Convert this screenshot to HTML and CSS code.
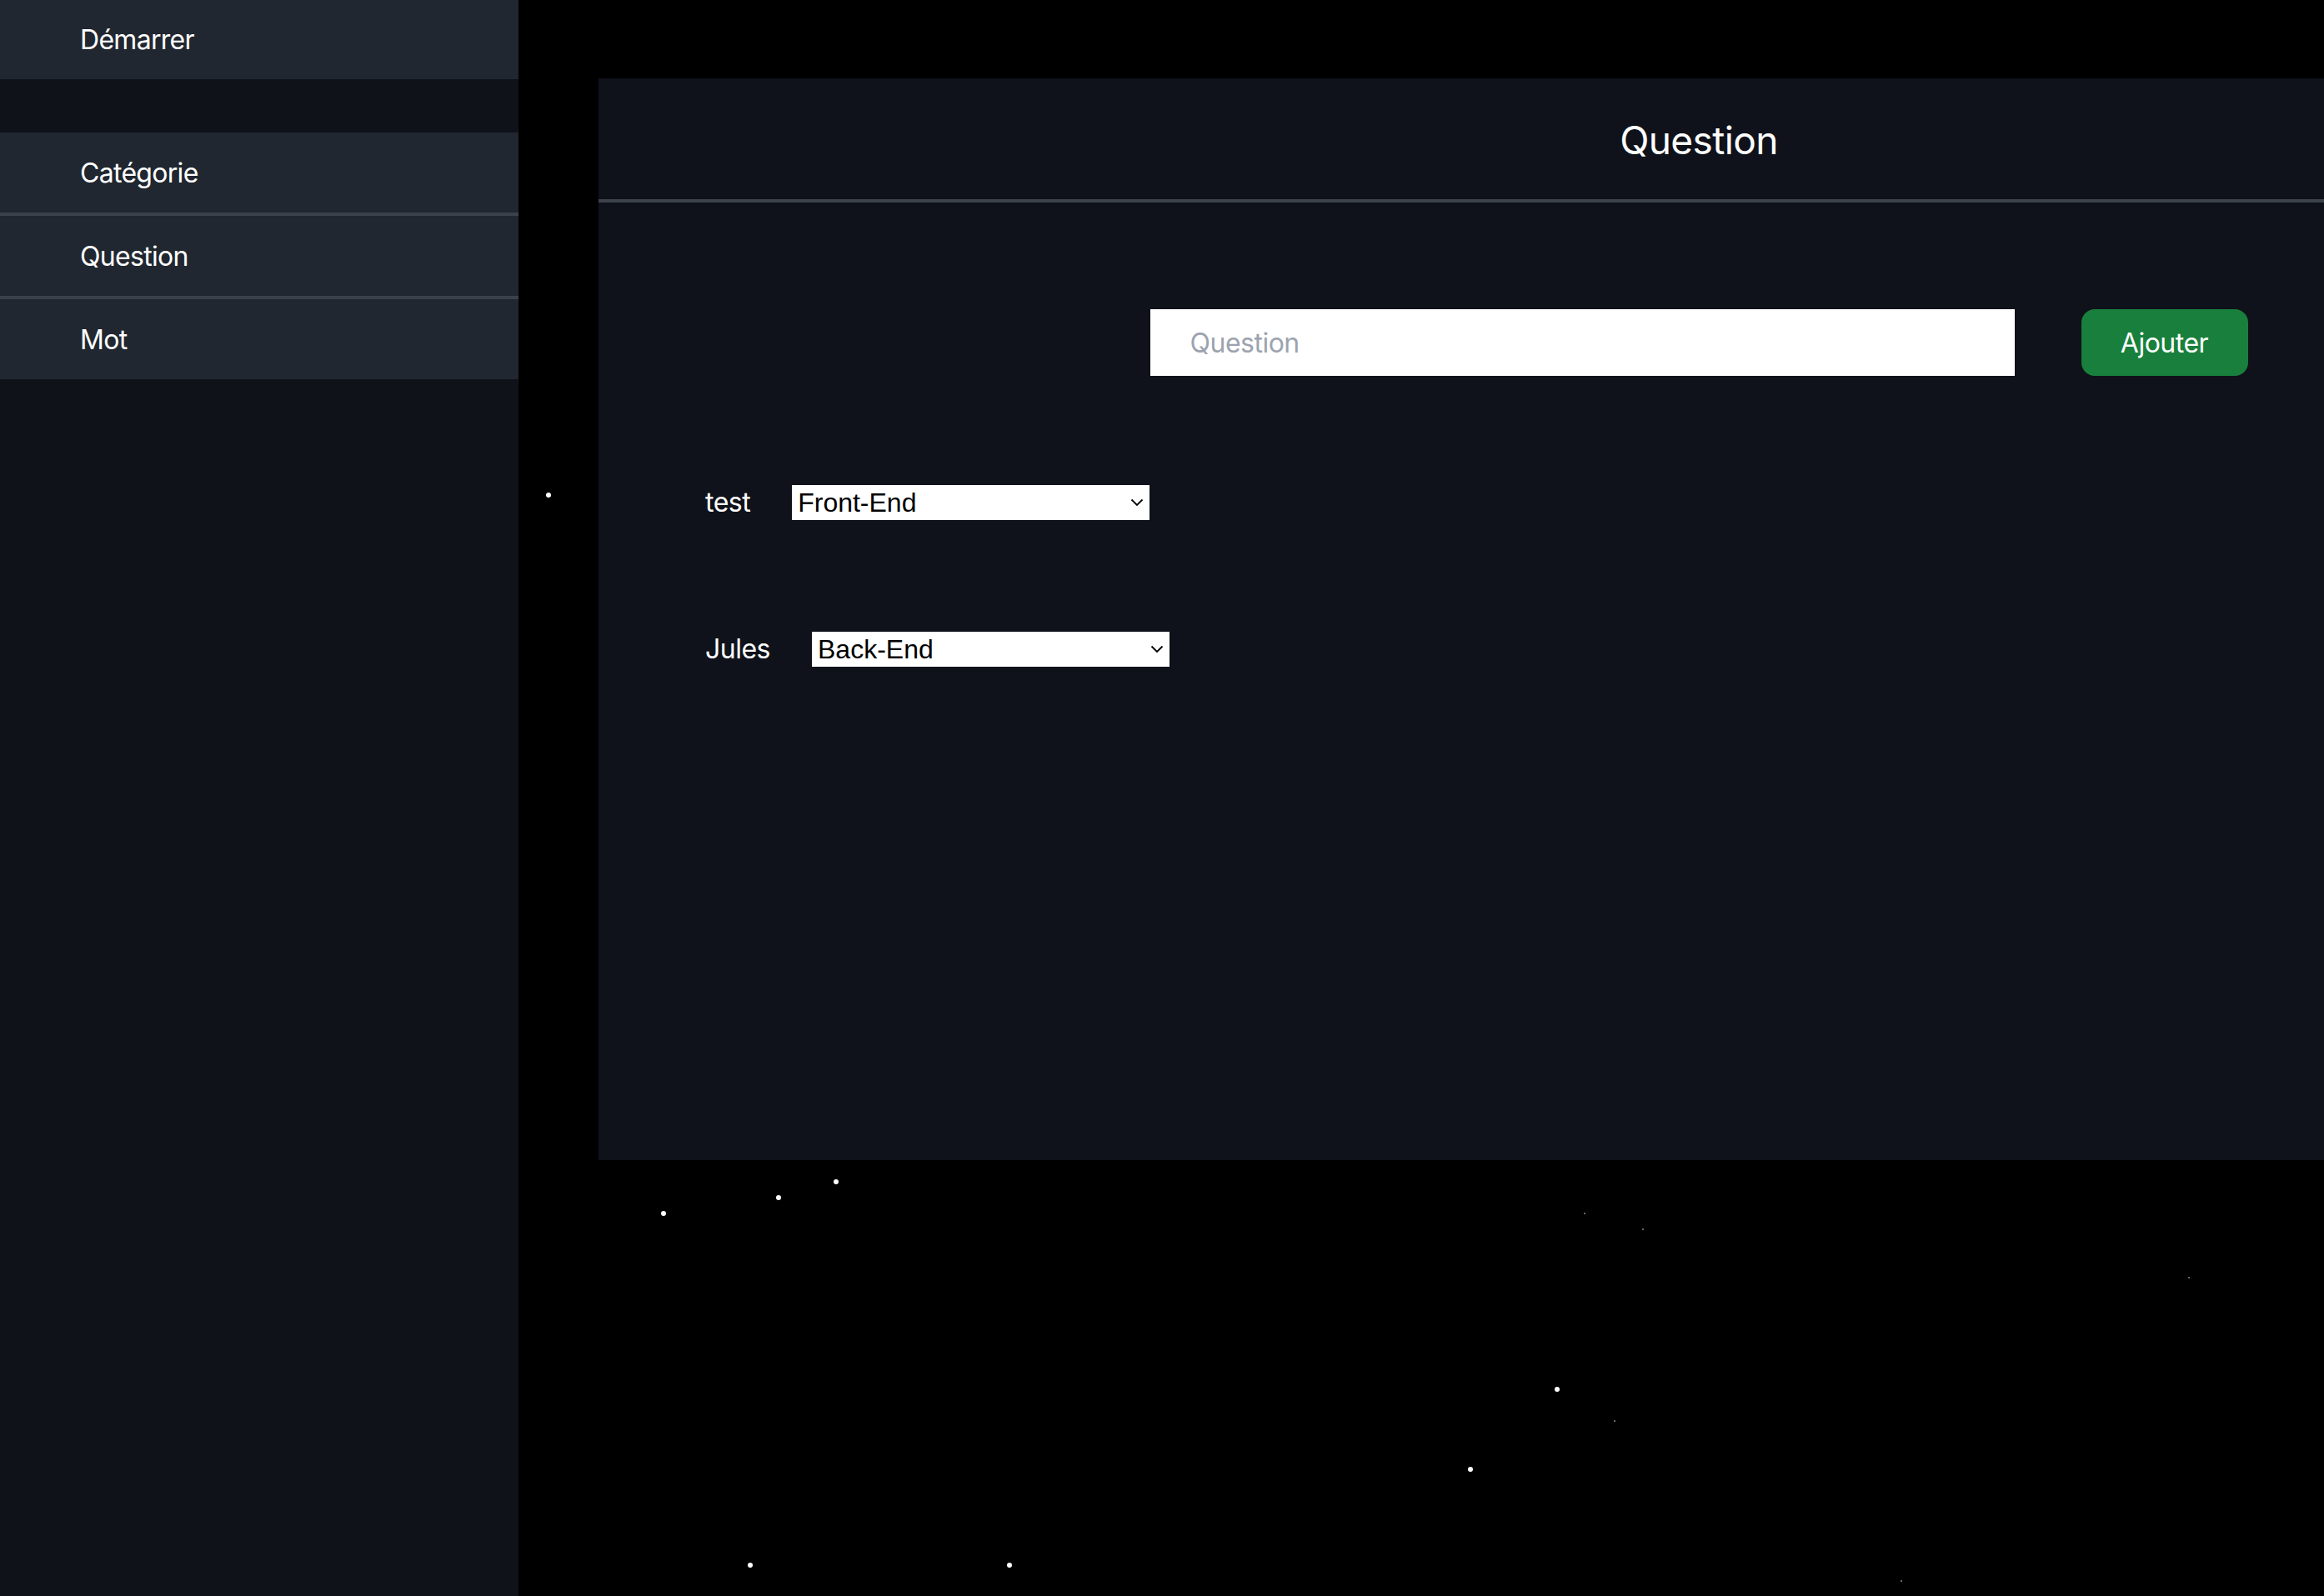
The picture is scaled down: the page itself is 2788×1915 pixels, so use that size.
FILE: index.html
```html
<!DOCTYPE html>
<html lang="fr">
<head>
<meta charset="utf-8">
<title>Question</title>
<link rel="stylesheet" href="styles.css">
</head>
<body>
<div class="stars">
  <span class="star" style="left:655px;top:591px"></span>
  <span class="star" style="left:793px;top:1453px"></span>
  <span class="star" style="left:931px;top:1434px"></span>
  <span class="star" style="left:1000px;top:1415px"></span>
  <span class="star tiny" style="left:1900px;top:1455px"></span>
  <span class="star tiny" style="left:1970px;top:1474px"></span>
  <span class="star tiny" style="left:2625px;top:1532px"></span>
  <span class="star" style="left:1865px;top:1664px"></span>
  <span class="star tiny" style="left:1936px;top:1704px"></span>
  <span class="star" style="left:1761px;top:1760px"></span>
  <span class="star" style="left:897px;top:1875px"></span>
  <span class="star" style="left:1208px;top:1875px"></span>
  <span class="star tiny" style="left:2280px;top:1896px"></span>
</div>
<div class="layout">
  <nav class="sidebar">
    <a class="nav-item start">Démarrer</a>
    <div class="nav-spacer"></div>
    <a class="nav-item bordered">Catégorie</a>
    <a class="nav-item bordered">Question</a>
    <a class="nav-item">Mot</a>
  </nav>
  <main class="panel">
    <header class="panel-header">
      <h1 class="panel-title">Question</h1>
    </header>
    <section class="panel-body">
      <form class="add-form">
        <input class="add-input" type="text" placeholder="Question">
        <button class="add-btn" type="button">Ajouter</button>
      </form>
      <div class="rows">
        <div class="row">
          <span class="row-label">test</span>
          <div class="select-wrap">
            <select class="cat-select">
              <option selected>Front-End</option>
              <option>Back-End</option>
            </select>
            <svg class="chev" width="16" height="10" viewBox="0 0 16 10"><path d="M1.5 1.5 L8 8 L14.5 1.5" fill="none" stroke="#000" stroke-width="1.8"/></svg>
          </div>
        </div>
        <div class="row">
          <span class="row-label">Jules</span>
          <div class="select-wrap">
            <select class="cat-select">
              <option>Front-End</option>
              <option selected>Back-End</option>
            </select>
            <svg class="chev" width="16" height="10" viewBox="0 0 16 10"><path d="M1.5 1.5 L8 8 L14.5 1.5" fill="none" stroke="#000" stroke-width="1.8"/></svg>
          </div>
        </div>
      </div>
    </section>
  </main>
</div>
</body>
</html>
```

FILE: styles.css
```css
html, body {
  margin: 0;
  padding: 0;
  background: #000;
  overflow: hidden;
  width: 2788px;
  height: 1915px;
  font-family: Inter, "Noto Sans", "Liberation Sans", sans-serif;
  color: #fff;
}

.stars {
  position: absolute;
  inset: 0;
  z-index: 0;
}

.star {
  position: absolute;
  width: 6px;
  height: 6px;
  border-radius: 50%;
  background: #fff;
}

.star.tiny {
  width: 2px;
  height: 2px;
  background: #888;
}

.layout {
  position: relative;
  z-index: 1;
  display: flex;
  align-items: flex-start;
}

.sidebar {
  width: 622px;
  height: 1915px;
  background: #0f1219;
  display: flex;
  flex-direction: column;
  flex-shrink: 0;
}

.nav-item {
  display: flex;
  align-items: center;
  height: 96px;
  padding-left: 96px;
  background: #212730;
  font-size: 32px;
  letter-spacing: -0.7px;
  color: #fff;
  box-sizing: border-box;
}

.nav-item.start {
  height: 95px;
}

.nav-item.bordered {
  height: 100px;
  border-bottom: 4px solid #3a414b;
}

.nav-spacer {
  height: 64px;
}

.panel {
  margin-left: 96px;
  margin-top: 94px;
  width: 2640px;
  height: 1298px;
  flex-shrink: 0;
  background: #0f121a;
}

.panel-header {
  height: 149px;
  box-sizing: border-box;
  border-bottom: 4px solid #3d434c;
  display: flex;
  align-items: center;
  justify-content: center;
}

.panel-title {
  margin: 0;
  font-size: 46px;
  font-weight: 400;
  letter-spacing: -0.6px;
  line-height: 1;
  padding-top: 2px;
}

.panel-body {
  padding: 128px 128px 0;
}

.add-form {
  display: flex;
  justify-content: center;
  gap: 80px;
}

.add-input {
  width: 1037px;
  height: 80px;
  box-sizing: border-box;
  border: none;
  outline: none;
  background: #fff;
  padding: 0 48px;
  font-family: inherit;
  font-size: 32px;
  letter-spacing: -0.5px;
  color: #111;
}

.add-input::placeholder {
  color: #9ca3af;
}

.add-btn {
  width: 200px;
  height: 80px;
  border: none;
  border-radius: 16px;
  background: #18803c;
  color: #fff;
  font-family: inherit;
  font-size: 32px;
  letter-spacing: -0.5px;
  padding: 0;
}

.rows {
  display: flex;
  flex-direction: column;
  gap: 134px;
  margin-top: 131px;
}

.row {
  display: flex;
  align-items: center;
  gap: 50px;
}

.row-label {
  font-size: 32px;
  letter-spacing: -0.5px;
  line-height: 42px;
}

.select-wrap {
  position: relative;
  width: 429px;
  height: 42px;
}

.cat-select {
  -webkit-appearance: none;
  appearance: none;
  width: 100%;
  height: 42px;
  border: none;
  border-radius: 0;
  background: #fff;
  color: #000;
  padding: 0 0 0 7px;
  font-family: "Liberation Sans", Arial, sans-serif;
  font-size: 32px;
  outline: none;
}

.chev {
  position: absolute;
  right: 7px;
  top: 16px;
  pointer-events: none;
}
```
